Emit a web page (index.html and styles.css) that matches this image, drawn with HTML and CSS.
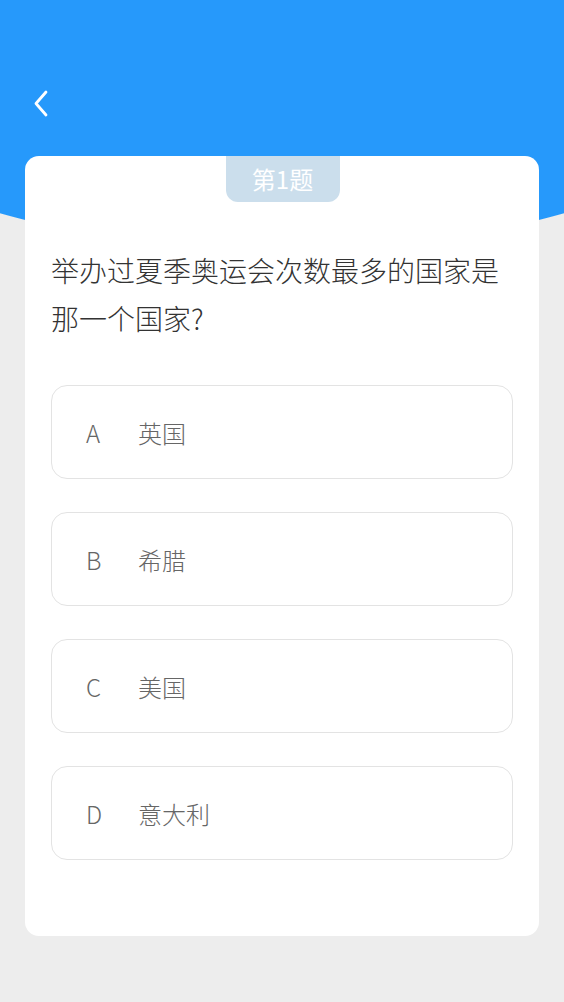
FILE: index.html
```html
<!DOCTYPE html>
<html lang="zh">
<head>
<meta charset="utf-8">
<link rel="stylesheet" href="styles.css">
</head>
<body>
<div class="page">
  <header class="top">
    <button class="back" aria-label="返回">
      <svg width="16" height="28" viewBox="0 0 16 28"><path d="M13 2 L3 13.5 L13 25" fill="none" stroke="#fff" stroke-width="2.8" stroke-linecap="round" stroke-linejoin="round"/></svg>
    </button>
  </header>
  <main class="card">
    <div class="badge">第1题</div>
    <div class="question">举办过夏季奥运会次数最多的国家是那一个国家?</div>
    <ul class="options">
      <li class="option"><span class="letter">A</span><span class="text">英国</span></li>
      <li class="option"><span class="letter">B</span><span class="text">希腊</span></li>
      <li class="option"><span class="letter">C</span><span class="text">美国</span></li>
      <li class="option"><span class="letter">D</span><span class="text">意大利</span></li>
    </ul>
  </main>
</div>
</body>
</html>
```

FILE: styles.css
```css
html, body {
  margin: 0;
  padding: 0;
}
body {
  width: 564px;
  height: 1002px;
  overflow: hidden;
  font-family: "Noto Sans", "Noto Sans CJK SC", sans-serif;
  background: #ededed radial-gradient(circle 1046px at 50% -794px, #2699fb 1045.5px, #ededed 1046.5px) no-repeat;
}
.page {
  display: flex;
  flex-direction: column;
  align-items: center;
}
.top {
  width: 100%;
  height: 156px;
  box-sizing: border-box;
  padding: 88px 0 0 31px;
}
.back {
  display: block;
  width: 24px;
  height: 32px;
  padding: 0 0 0 2px;
  border: 0;
  background: none;
  cursor: pointer;
}
.back svg { display: block; }
.card {
  width: 514px;
  height: 780px;
  box-sizing: border-box;
  background: #fff;
  border-radius: 14px;
  padding: 0 26px;
  display: flex;
  flex-direction: column;
}
.badge {
  align-self: center;
  width: 114px;
  height: 46px;
  margin-left: 1px;
  background: #cbdeec;
  color: #fff;
  border-radius: 0 0 12px 12px;
  font-size: 24px;
  font-family: "Noto Sans CJK SC", sans-serif;
  line-height: 46px;
  text-align: center;
}
.question {
  margin-top: 44px;
  font-size: 28px;
  font-weight: 300;
  line-height: 48px;
  color: #333;
  font-family: "Noto Sans CJK SC", sans-serif;
}
.options {
  list-style: none;
  margin: 43px 0 0;
  padding: 0;
  display: flex;
  flex-direction: column;
  gap: 33px;
}
.option {
  height: 94px;
  box-sizing: border-box;
  border: 1.5px solid #e3e3e3;
  border-radius: 16px;
  display: flex;
  align-items: center;
  padding-left: 34px;
  color: #666;
  font-size: 24px;
  font-weight: 300;
}
.letter {
  width: 52px;
  font-family: "Noto Sans CJK SC", sans-serif;
}
.text {
  font-family: "Noto Sans CJK SC", sans-serif;
}
```
